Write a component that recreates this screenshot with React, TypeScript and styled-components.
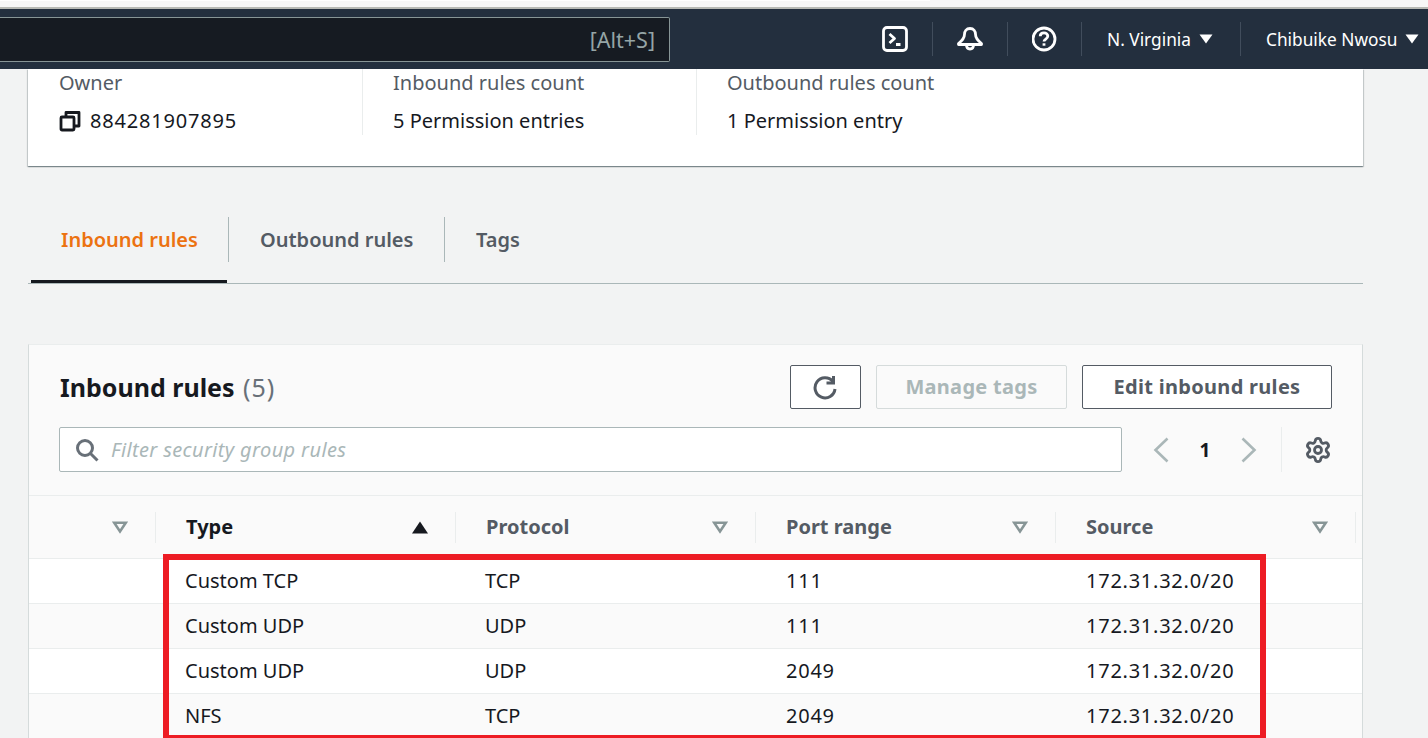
import React from "react";
import styled, { createGlobalStyle } from "styled-components";
import { Settings } from "lucide-react";

const Global = createGlobalStyle`
  html, body { margin: 0; padding: 0; background: #f2f3f3; }
  body { width: 1428px; height: 738px; overflow: hidden; font-family: "Noto Sans", "Open Sans", sans-serif; color: #16191f; }
  * { box-sizing: border-box; }
`;

const Page = styled.div`
  position: relative;
  width: 1428px;
  height: 738px;
  overflow: hidden;
  background: #f2f3f3;
`;
const BrowserEdge = styled.div`
  height: 9px;
  background: #f7f7f7;
  border-bottom: 2px solid #b7b9b4;
  &::before {
    content: "";
    display: block;
    width: 930px;
    height: 1px;
    background: #fff;
  }
`;
const Nav = styled.header`
  height: 60px;
  background: #232f3e;
  display: flex;
  align-items: center;
`;
const SearchBox = styled.div`
  width: 670px;
  height: 45px;
  margin-right: 187px;
  flex: none;
  display: flex;
  align-items: center;
  justify-content: flex-end;
  padding-right: 14px;
  background: #161b22;
  border: 1px solid #879596;
  border-left: 0;
  border-radius: 0 2px 2px 0;
  color: #95a5a6;
  font-size: 21.5px;
`;
const NavCell = styled.div<{ $w: number; $divider?: boolean; $pad?: number }>`
  flex: none;
  width: ${(p) => p.$w}px;
  height: 34px;
  display: flex;
  align-items: center;
  justify-content: ${(p) => (p.$pad ? "flex-start" : "center")};
  padding-left: ${(p) => p.$pad ?? 0}px;
  gap: 8px;
  color: #fff;
  font-size: 17.3px;
  white-space: nowrap;
  border-left: ${(p) => (p.$divider ? "1px solid #414d5c" : "0")};
`;
const Content = styled.main`
  padding: 0 65px 0 28px;
`;
const SummaryCard = styled.section`
  height: 97px;
  background: #fff;
  box-shadow: 0 1px 1px 0 rgba(0, 28, 36, 0.3), 1px 1px 1px 0 rgba(0, 28, 36, 0.15), -1px 1px 1px 0 rgba(0, 28, 36, 0.15);
  display: grid;
  grid-template-columns: 334px 334px 334px;
  padding-left: 1px;
`;
const SummaryCol = styled.div<{ $divider?: boolean }>`
  height: 66px;
  padding: 0 0 0 30px;
  border-right: ${(p) => (p.$divider ? "1px solid #eaeded" : "0")};
`;
const SummaryLabel = styled.div`
  height: 28px;
  line-height: 28px;
  font-size: 20px;
  color: #545b64;
`;
const SummaryValue = styled.div<{ $numeric?: boolean }>`
  height: 28px;
  margin-top: 10px;
  line-height: 28px;
  font-size: 20px;
  letter-spacing: ${(p) => (p.$numeric ? "0.8px" : "0")};
  color: #16191f;
  display: flex;
  align-items: center;
  gap: 9px;
`;
const Tabs = styled.nav`
  margin-top: 51px;
  height: 67px;
  display: flex;
  align-items: flex-start;
  border-bottom: 1px solid #aab7b8;
  padding-left: 3px;
`;
const Tab = styled.div<{ $active?: boolean; $w: number; $divider?: boolean; $pad: number }>`
  position: relative;
  width: ${(p) => p.$w}px;
  height: 66px;
  padding: 0 0 22px ${(p) => p.$pad}px;
  display: flex;
  align-items: center;
  font-size: 20px;
  font-weight: 600;
  color: ${(p) => (p.$active ? "#ec7211" : "#545b64")};
  white-space: nowrap;
  &::before {
    content: "";
    display: ${(p) => (p.$active ? "block" : "none")};
    position: absolute;
    left: 0;
    right: 1px;
    bottom: 0;
    height: 3px;
    background: #16191f;
  }
  &::after {
    content: "";
    display: ${(p) => (p.$divider ? "block" : "none")};
    position: absolute;
    right: -1px;
    top: 0;
    width: 1px;
    height: 45px;
    background: #aab7b8;
  }
`;
const RulesCard = styled.section`
  margin-top: 60px;
  background: #fafafa;
  border-left: 1px solid #d5dbdb;
  border-right: 1px solid #d5dbdb;
  border-top: 1px solid #eaeded;
`;
const CardHead = styled.div`
  padding: 20px 30px 0 30px;
  height: 151px;
  border-bottom: 1px solid #eaeded;
`;
const TitleRow = styled.div`
  display: flex;
  align-items: center;
  height: 44px;
`;
const Title = styled.h2`
  margin: 0;
  flex: 1;
  padding-left: 1px;
  font-size: 25px;
  font-weight: 700;
  color: #16191f;
`;
const Count = styled.span`
  font-weight: 400;
  margin-left: 2px;
  letter-spacing: 1px;
  color: #687078;
`;
const ActionButton = styled.button<{ $w: number; $disabled?: boolean }>`
  width: ${(p) => p.$w}px;
  height: 44px;
  margin-left: 15px;
  padding: 0 0 2px;
  display: flex;
  align-items: center;
  justify-content: center;
  background: ${(p) => (p.$disabled ? "#fafafa" : "#fff")};
  border: 1px solid ${(p) => (p.$disabled ? "#d5dbdb" : "#545b64")};
  border-radius: 2px;
  font-family: inherit;
  font-size: 20px;
  font-weight: 700;
  letter-spacing: 0.3px;
  color: ${(p) => (p.$disabled ? "#aab7b8" : "#545b64")};
`;
const FilterRow = styled.div`
  margin-top: 18px;
  display: flex;
  align-items: center;
  height: 45px;
`;
const FilterInput = styled.div`
  width: 1063px;
  height: 45px;
  flex: none;
  display: flex;
  align-items: center;
  gap: 12px;
  padding-left: 15px;
  background: #fff;
  border: 1px solid #aab7b8;
  border-radius: 2px;
  color: #687078;
`;
const Placeholder = styled.span`
  font-size: 20px;
  font-style: italic;
  letter-spacing: 0.37px;
  color: #aab7b8;
`;
const Pager = styled.div`
  flex: none;
  width: 159px;
  margin-left: 17px;
  height: 45px;
  display: grid;
  grid-template-columns: 44px 44px 44px;
  align-items: center;
  justify-items: center;
`;
const PageNumber = styled.span`
  font-size: 19px;
  font-weight: 700;
  color: #16191f;
`;
const GearCell = styled.div`
  flex: none;
  width: 51px;
  height: 45px;
  margin-left: -17px;
  display: flex;
  align-items: center;
  justify-content: flex-end;
  border-left: 1px solid #eaeded;
  color: #545b64;
`;
const HeaderRow = styled.div`
  display: grid;
  grid-template-columns: 127px repeat(4, 300px) 1fr;
  height: 63px;
  align-items: center;
  border-bottom: 1px solid #eaeded;
`;
const HeaderCell = styled.div<{ $active?: boolean }>`
  height: 31px;
  display: flex;
  align-items: center;
  justify-content: space-between;
  padding: 0 27px 0 30px;
  border-right: 1px solid #eaeded;
  font-size: 20px;
  font-weight: 700;
  color: ${(p) => (p.$active ? "#16191f" : "#545b64")};
`;
const HeaderLabel = styled.span`
  margin-bottom: 2px;
`;
const FirstHeaderCell = styled(HeaderCell)`
  justify-content: flex-end;
  padding: 0 27px 0 0;
`;
const Row = styled.div<{ $alt?: boolean }>`
  display: grid;
  grid-template-columns: 127px repeat(4, 300px) 1fr;
  height: 45px;
  align-items: center;
  background: ${(p) => (p.$alt ? "#fafafa" : "#fff")};
  border-bottom: 1px solid #eaeded;
`;
const Cell = styled.div<{ $numeric?: boolean }>`
  padding: 0 0 2px ${(p) => (p.$numeric ? 30 : 29)}px;
  font-size: 20px;
  letter-spacing: ${(p) => (p.$numeric ? "0.75px" : "0")};
  color: #16191f;
`;
const RedBox = styled.div`
  position: absolute;
  left: 163px;
  top: 554px;
  width: 1103px;
  height: 184px;
  border: 6px solid #ed1c24;
  border-bottom-width: 3px;
  pointer-events: none;
`;

const TerminalIcon = () => (
  <svg width="26" height="26" viewBox="0 0 26 26" fill="none" stroke="#fff" strokeWidth="2.8" strokeLinejoin="round">
    <rect x="1.500" y="1.500" width="23" height="23" rx="3.500" />
    <path d="M7.500 8l5 4.500-5 4.500M14 18.500h4.500" />
  </svg>
);
const BellIcon = () => (
  <svg width="28" height="28" viewBox="0 0 28 28" fill="none" stroke="#fff" strokeWidth="2.800" strokeLinejoin="round">
    <path d="M14 3.500c-3.800 0-5.500 2.800-5.500 5.800 0 3.700-2.700 6.700-6 9.200v1h23v-1c-3.300-2.500-6-5.500-6-9.200 0-3-1.700-5.800-5.500-5.800z" />
    <path d="M10.500 20c0 2.400 1.500 4 3.500 4s3.500-1.600 3.500-4" />
  </svg>
);
const HelpIcon = () => (
  <svg width="26" height="26" viewBox="1 0 26 26" fill="none" stroke="#fff" strokeWidth="2.800">
    <circle cx="13" cy="13" r="11" />
    <path d="M9.200 10.300c0-2.200 1.700-3.500 3.800-3.500s3.800 1.300 3.800 3.300c0 3-3.800 2.900-3.800 5.400" />
    <path d="M13 17.300v2.400" />
  </svg>
);
const Caret = () => (
  <svg width="14" height="10" viewBox="0 0 14 10"><path d="M0.500 0.500h13L7 9.500z" fill="#fff" /></svg>
);
const CopyIcon = () => (
  <svg width="22" height="22" viewBox="0 0 22 22" fill="none" stroke="#16191f" strokeWidth="2.800" strokeLinejoin="round">
    <rect x="2" y="7" width="13" height="13" rx="1" />
    <path d="M7 6V2.500h13V16h-4" />
  </svg>
);
const RefreshIcon = () => (
  <svg width="28" height="28" viewBox="1 -2 28 28" fill="none" stroke="#545b64" strokeWidth="3">
    <path d="M21.800 7.500A10 10 0 1 0 24 15" />
    <path d="M22.500 2v7h-7" strokeLinejoin="miter" />
  </svg>
);
const SearchIcon = () => (
  <svg width="24" height="24" viewBox="0 0 24 24" fill="none" stroke="#687078" strokeWidth="3">
    <circle cx="10" cy="10" r="7.500" />
    <path d="M15.500 15.500l7 7" />
  </svg>
);
const PrevIcon = () => (
  <svg width="18" height="26" viewBox="0 0 18 26" fill="none" stroke="#aab7b8" strokeWidth="2.600">
    <path d="M15.500 1.500L3.500 13l12 11.500" />
  </svg>
);
const NextIcon = () => (
  <svg width="18" height="26" viewBox="0 0 18 26" fill="none" stroke="#aab7b8" strokeWidth="2.600">
    <path d="M2.500 1.500L14.500 13l-12 11.500" />
  </svg>
);
const SortDown = () => (
  <svg width="16" height="13" viewBox="0 0 16 13" fill="none" stroke="#879596" strokeWidth="2.600" strokeLinejoin="miter">
    <path d="M2.200 1.800h11.600L8 10.500z" />
  </svg>
);
const SortUp = () => (
  <svg width="16" height="13" viewBox="0 0 16 13"><path d="M8 0.500L16 12.500H0z" fill="#16191f" /></svg>
);

const rows = [
  ["Custom TCP", "TCP", "111", "172.31.32.0/20"],
  ["Custom UDP", "UDP", "111", "172.31.32.0/20"],
  ["Custom UDP", "UDP", "2049", "172.31.32.0/20"],
  ["NFS", "TCP", "2049", "172.31.32.0/20"],
];

export default function App() {
  return (
    <Page>
      <Global />
      <BrowserEdge />
      <Nav>
        <SearchBox>[Alt+S]</SearchBox>
        <NavCell $w={75}><TerminalIcon /></NavCell>
        <NavCell $w={75} $divider><BellIcon /></NavCell>
        <NavCell $w={74} $divider><HelpIcon /></NavCell>
        <NavCell $w={159} $divider $pad={25}>N. Virginia <Caret /></NavCell>
        <NavCell $w={188} $divider $pad={25}>Chibuike Nwosu <Caret /></NavCell>
      </Nav>
      <Content>
        <SummaryCard>
          <SummaryCol $divider>
            <SummaryLabel>Owner</SummaryLabel>
            <SummaryValue $numeric><CopyIcon />884281907895</SummaryValue>
          </SummaryCol>
          <SummaryCol $divider>
            <SummaryLabel>Inbound rules count</SummaryLabel>
            <SummaryValue>5 Permission entries</SummaryValue>
          </SummaryCol>
          <SummaryCol>
            <SummaryLabel>Outbound rules count</SummaryLabel>
            <SummaryValue>1 Permission entry</SummaryValue>
          </SummaryCol>
        </SummaryCard>
        <Tabs>
          <Tab $active $w={197} $pad={30} $divider>Inbound rules</Tab>
          <Tab $w={216} $pad={32} $divider>Outbound rules</Tab>
          <Tab $w={120} $pad={32}>Tags</Tab>
        </Tabs>
        <RulesCard>
          <CardHead>
            <TitleRow>
              <Title>Inbound rules <Count>(5)</Count></Title>
              <ActionButton $w={71} aria-label="Refresh"><RefreshIcon /></ActionButton>
              <ActionButton $w={191} $disabled>Manage tags</ActionButton>
              <ActionButton $w={250}>Edit inbound rules</ActionButton>
            </TitleRow>
            <FilterRow>
              <FilterInput>
                <SearchIcon />
                <Placeholder>Filter security group rules</Placeholder>
              </FilterInput>
              <Pager>
                <PrevIcon />
                <PageNumber>1</PageNumber>
                <NextIcon />
              </Pager>
              <GearCell><Settings size={28} strokeWidth={2.4} /></GearCell>
            </FilterRow>
          </CardHead>
          <HeaderRow>
            <FirstHeaderCell><SortDown /></FirstHeaderCell>
            <HeaderCell $active><HeaderLabel>Type</HeaderLabel> <SortUp /></HeaderCell>
            <HeaderCell><HeaderLabel>Protocol</HeaderLabel> <SortDown /></HeaderCell>
            <HeaderCell><HeaderLabel>Port range</HeaderLabel> <SortDown /></HeaderCell>
            <HeaderCell><HeaderLabel>Source</HeaderLabel> <SortDown /></HeaderCell>
          </HeaderRow>
          {rows.map((r, i) => (
            <Row key={i} $alt={i % 2 === 1}>
              <span />
              {r.map((c, j) => <Cell key={j} $numeric={j >= 2}>{c}</Cell>)}
            </Row>
          ))}
        </RulesCard>
      </Content>
      <RedBox />
    </Page>
  );
}
